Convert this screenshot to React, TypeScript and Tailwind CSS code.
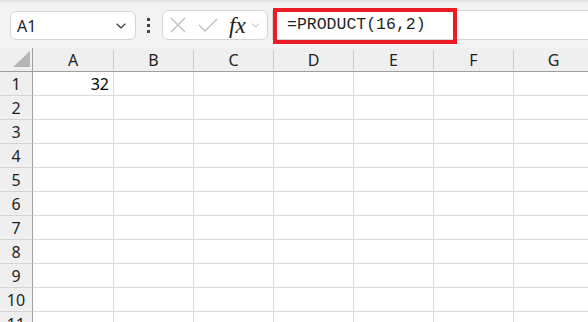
import { ChevronDown } from "lucide-react";

const COLS = ["A", "B", "C", "D", "E", "F", "G"];
const ROWS = [1, 2, 3, 4, 5, 6, 7, 8, 9, 10, 11];

function NameBox() {
  return (
    <div className="flex h-[29px] w-[126px] items-center justify-between rounded-[6px] border border-[#d4d4d4] bg-white pl-[6px] pr-[6px]">
      <span className="text-[16px] text-[#1f1f1f]">A1</span>
      <ChevronDown size={16} strokeWidth={1.6} className="text-[#333]" />
    </div>
  );
}

function FormulaControls() {
  return (
    <div className="flex h-[30px] w-[106px] items-center rounded-[6px] border border-[#d4d4d4] bg-white pl-[5px]">
      <svg width="18" height="18" viewBox="0 0 18 18" className="ml-[1px]">
        <path d="M2 2 L16 16 M16 2 L2 16" stroke="#bdbdbd" strokeWidth="1.3" fill="none" />
      </svg>
      <svg width="20" height="16" viewBox="0 0 20 16" className="ml-[11px]">
        <path d="M1 8 L7 14 L19 2" stroke="#bdbdbd" strokeWidth="1.3" fill="none" />
      </svg>
      <span
        className="ml-[11px] text-[23px] italic leading-none text-[#1a1a1a]"
        style={{ fontFamily: '"Liberation Serif", serif' }}
      >
        fx
      </span>
      <ChevronDown size={13} strokeWidth={1.4} className="ml-[3px] text-[#9a9a9a]" />
    </div>
  );
}

export default function App() {
  return (
    <div
      className="h-[322px] w-[588px] overflow-hidden bg-[#f0f0f0]"
      style={{ fontFamily: '"Noto Sans", "Open Sans", sans-serif' }}
    >
      {/* toolbar */}
      <div className="h-[3px] bg-gradient-to-b from-[#dedede] to-[#f0f0f0]" />
      <div className="flex h-[45px] items-start bg-[#f3f3f3] pl-[10px] pt-[7px]">
        <div className="mt-[1px]">
          <NameBox />
        </div>
        <div className="ml-[11px] mt-[8px] flex w-[4px] flex-col gap-[3px]">
          <span className="h-[3px] w-[3px] bg-[#444]" />
          <span className="h-[3px] w-[3px] bg-[#444]" />
          <span className="h-[3px] w-[3px] bg-[#444]" />
        </div>
        <div className="ml-[11px]">
          <FormulaControls />
        </div>
        <div className="relative ml-[4px] h-[30px] flex-1 border-y border-l border-[#d4d4d4] bg-white">
          <span
            className="absolute left-[14px] top-[3px] text-[16.5px] leading-[22px] text-[#1f1f1f]"
            style={{ fontFamily: '"Liberation Mono", monospace' }}
          >
            =PRODUCT(16,2)
          </span>
          <div className="absolute left-0 top-[-3px] h-[36px] w-[184px] border-[4px] border-[#ec1c24]" />
        </div>
      </div>

      {/* grid */}
      <div className="grid grid-cols-[33px_81px_repeat(6,80px)]">
        <div className="relative h-[24px] border-b border-r border-[#9e9e9e] bg-[#efefef]">
          <svg width="18" height="17" viewBox="0 0 18 17" className="absolute left-[13px] top-[3px]">
            <path d="M17 0 L17 16 L0 16 Z" fill="#b5b5b5" />
          </svg>
        </div>
        {COLS.map((c) => (
          <div
            key={c}
            className="flex h-[24px] items-end justify-center border-b border-[#9e9e9e] bg-[#efefef] pb-[1px]"
          >
            <div className="flex h-[20px] w-full items-center justify-center border-r border-[#c8c8c8] text-[16px] text-[#1f1f1f]">
              {c}
            </div>
          </div>
        ))}
        {ROWS.map((r) => (
          <div key={r} className="contents">
            <div className="flex h-[24px] items-center justify-center border-b border-r border-[#d4d4d4] border-r-[#9e9e9e] bg-[#efefef] text-[16px] text-[#1f1f1f]">
              {r}
            </div>
            {COLS.map((c) => (
              <div
                key={c}
                className="flex h-[24px] items-center justify-end border-b border-r border-[#dadada] bg-white pr-[4px] text-[16px] text-black"
              >
                {r === 1 && c === "A" ? "32" : ""}
              </div>
            ))}
          </div>
        ))}
      </div>
    </div>
  );
}
